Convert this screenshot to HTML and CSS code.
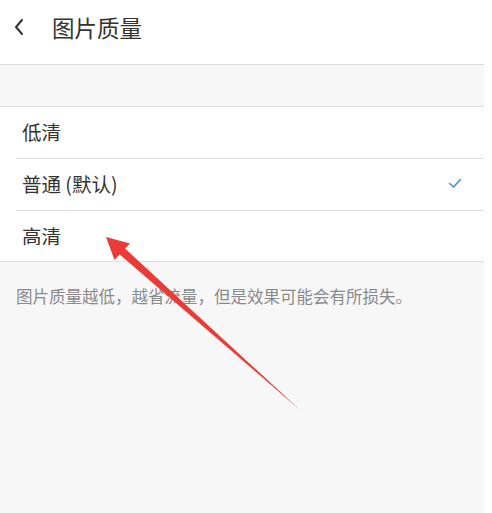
FILE: index.html
```html
<!DOCTYPE html>
<html lang="zh-CN">
<head>
  <meta charset="UTF-8" />
  <title>图片质量</title>
  <link rel="stylesheet" href="styles.css">
</head>
<body>
  <div class="screen">
    <header class="top-bar">
      <svg class="back" width="12" height="18" viewBox="0 0 12 18">
        <path d="M9 2 L3 9 L9 16" fill="none" stroke="#333" stroke-width="2" stroke-linecap="round" stroke-linejoin="round"/>
      </svg>
      <h1 class="title">图片质量</h1>
    </header>

    <div class="spacer"></div>

    <ul class="options">
      <li class="option">低清</li>
      <li class="option selected">
        <span>普通 (默认)</span>
        <svg class="check" width="14" height="11" viewBox="0 0 14 11">
          <path d="M1.5 5.5 L5.5 9 L12.5 1.5" fill="none" stroke="#4a8fd6" stroke-width="1.6" stroke-linecap="round" stroke-linejoin="round"/>
        </svg>
      </li>
      <li class="option">高清</li>
    </ul>

    <p class="hint">图片质量越低，越省流量，但是效果可能会有所损失。</p>

    <!-- annotation arrow drawn over the screenshot -->
    <svg class="arrow" width="492" height="513" viewBox="0 0 492 513">
      <polygon points="106,237 130,243.4 125.1,248.6 300,410 119.7,254.6 114.5,260" fill="#ea3b36"/>
    </svg>
  </div>
</body>
</html>
```

FILE: styles.css
```css
* {
  margin: 0;
  padding: 0;
  box-sizing: border-box;
}

body {
  font-family: "Noto Sans CJK SC", "Noto Sans", sans-serif;
  background: #fff;
  overflow: hidden;
}

.screen {
  position: relative;
  width: 484px;
  height: 513px;
  background: #f7f7f7;
}

.top-bar {
  display: flex;
  align-items: center;
  height: 65px;
  padding: 0 0 10px 13px;
  background: #fff;
  border-bottom: 1px solid #dcdcdc;
}

.back {
  margin-right: 27px;
}

.title {
  font-size: 22.5px;
  font-weight: normal;
  color: #333;
}

.spacer {
  height: 41px;
}

.options {
  list-style: none;
  background: #fff;
  border-top: 1px solid #dedede;
  border-bottom: 1px solid #dedede;
  padding-left: 16px;
}

.option {
  display: flex;
  align-items: center;
  justify-content: space-between;
  height: 52px;
  padding: 0 22px 2px 6px;
  font-size: 19.5px;
  color: #333;
  border-bottom: 1px solid #dedede;
}

.option:last-child {
  border-bottom: none;
  height: 50px;
}

.hint {
  padding: 22px 16px;
  font-size: 16.5px;
  color: #8a8a8a;
}

.arrow {
  position: absolute;
  left: 0;
  top: 0;
}
```
